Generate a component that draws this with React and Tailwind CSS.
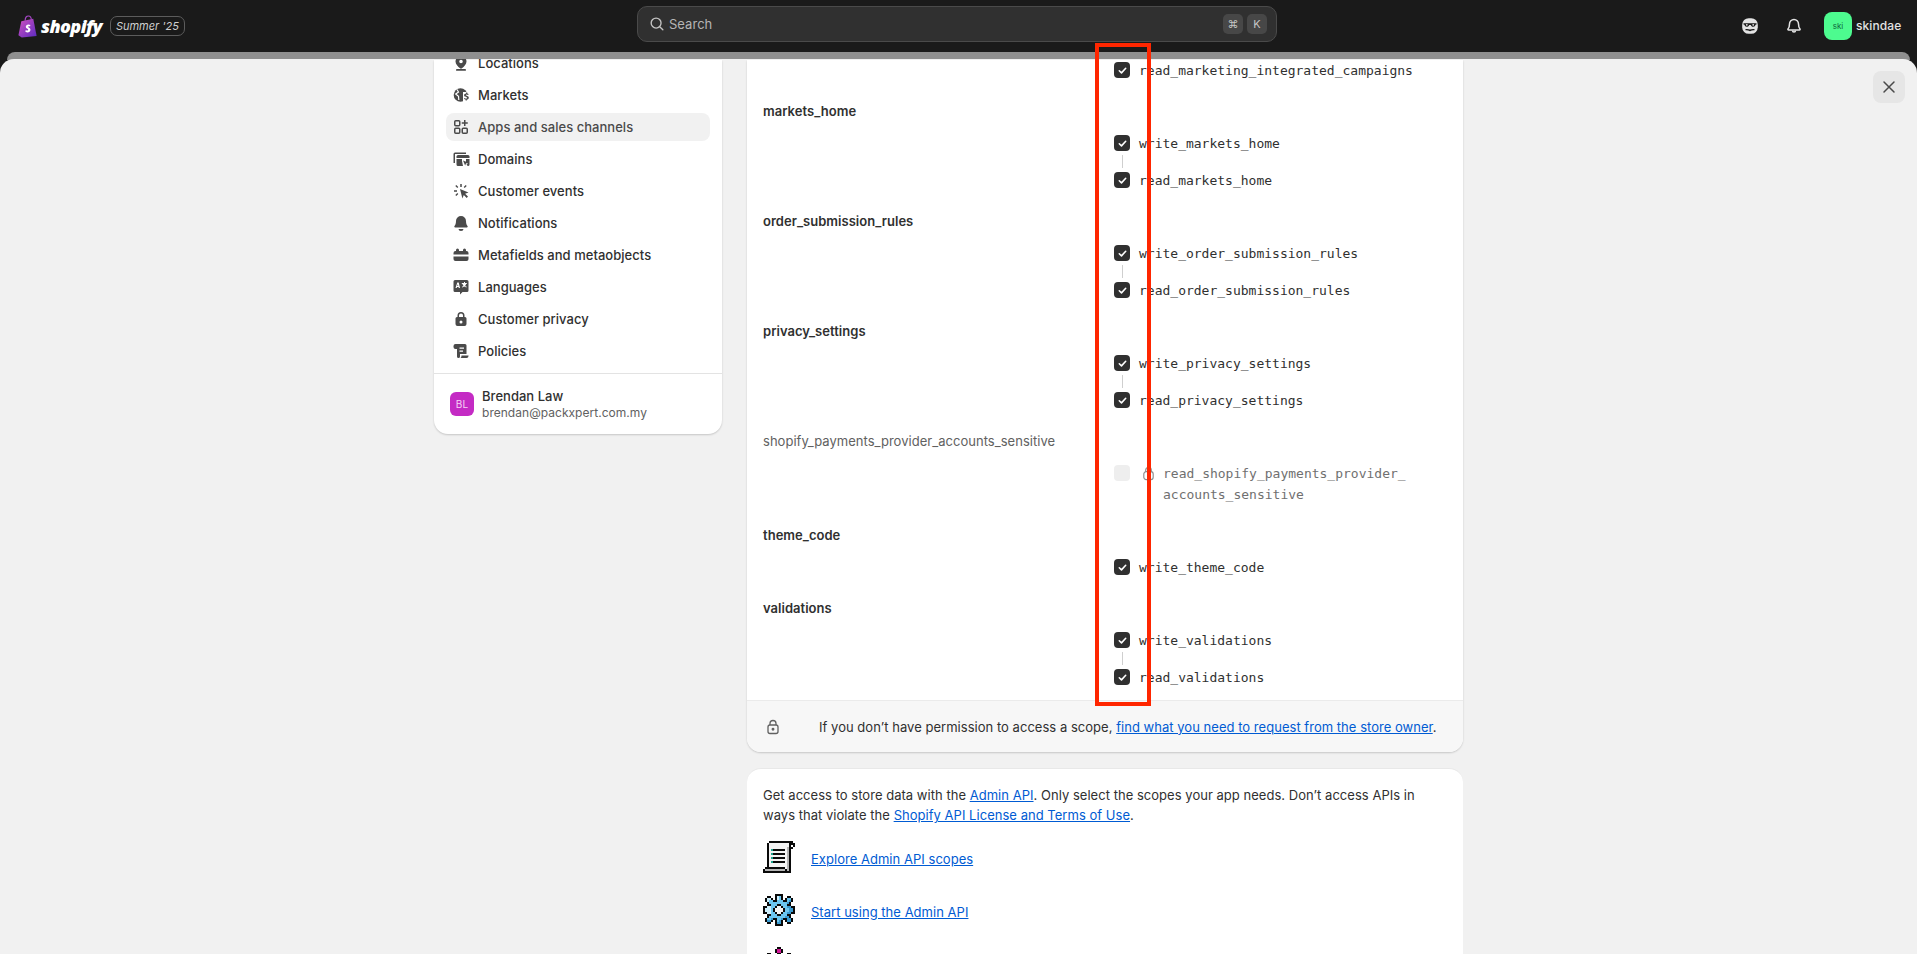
import React from "react";

const PIX = { k: "#0a0a0a", w: "#f4f4f4", g: "#b5b5b5", t: "#1fa58f", b: "#6cc6f0", d: "#3a9ad0", l: "#cdeefb", m: "#d6189a" };

function Pixels({ rows, className }) {
  return (
    <svg viewBox="0 0 16 16" width="32" height="32" shapeRendering="crispEdges" className={"shrink-0 " + (className || "")}>
      {rows.flatMap((r, y) =>
        r.split("").map((c, x) => (PIX[c] ? <rect key={x + "-" + y} x={x} y={y} width="1" height="1" fill={PIX[c]} /> : null))
      )}
    </svg>
  );
}

const scrollRows = [
  "   kkkkkkkkkkkk ",
  "  kwwwwwwwwwwkkk",
  "  kwwwwwwwwwwk k",
  "  kwwwwwwwwwgkk ",
  "  kwtkkkkkkwgk  ",
  "  kwwwwwwwwwgk  ",
  "  kwtkkkkkkwgk  ",
  "  kwwwwwwwwwgk  ",
  "  kwtkkkkkkwgk  ",
  "  kwwwwwwwwwgk  ",
  "  kwtkkkkkkwgk  ",
  "  kwwwwwwwwwgk  ",
  "  kwwwwwwwwwgk  ",
  " kkkkkkkkkkwgk  ",
  "kggggggggggkgk  ",
  "kkkkkkkkkkkkkk  ",
];

const gearRows = [
  "      kkkk      ",
  "  kk  klbk  kk  ",
  " kllk klbk kbbk ",
  " klbbkkbbbkkbdk ",
  "  kbbbbbbbbbdk  ",
  "  kkbbbkkbbbkk  ",
  "kkllbbkwwkbbddkk",
  "klllbkwwwwkbbddk",
  "klllbkwwwwkbbddk",
  "kkllbbkwwkbbddkk",
  "  kkbbbkkbbbkk  ",
  "  kbbbbbbbbddk  ",
  " kbbdkkbbdkkddk ",
  " kddk kbdk kddk ",
  "  kk  kddk  kk  ",
  "      kkkk      ",
];

const stateRows = [
  "       kk       ",
  "      kmmk      ",
  "      kmmk      ",
  "  kk   kk   kk  ",
];

function Ico({ children }) {
  return (
    <svg viewBox="0 0 20 20" width="20" height="20" fill="#4a4a4a" className="shrink-0">
      {children}
    </svg>
  );
}

const ICONS = {
  location: (
    <Ico>
      <path fillRule="evenodd" d="M10 3a5.500 5.500 0 0 0-5.500 5.500c0 2.600 2.500 5.200 4.600 6.800a1.500 1.500 0 0 0 1.800 0c2.100-1.600 4.600-4.200 4.600-6.800A5.500 5.500 0 0 0 10 3Zm0 7.300a1.800 1.800 0 1 1 0-3.600 1.800 1.800 0 0 1 0 3.600Z" />
      <rect x="5" y="16" width="10" height="1.800" rx=".9" />
    </Ico>
  ),
  globe: (
    <Ico>
      <circle cx="9.500" cy="10" r="6.800" />
      <path d="M6 4.500 7.500 7l-2.800 2 2.800 2.300.3 3.700" fill="none" stroke="#fff" strokeWidth="1.200" />
      <rect x="12" y="7" width="7" height="10" fill="#fff" />
      <path d="M15.100 7.500v1c-1.200.1-2 .8-2 1.800 0 2 3 1.400 3 2.600 0 .4-.5.600-1 .600-.6 0-1.100-.2-1.500-.6l-.7.900c.4.400 1 .7 1.700.8v1h1.200v-1c1.200-.2 2-.9 2-1.900 0-2.100-3-1.500-3-2.600 0-.3.400-.5.900-.5.500 0 .9.200 1.300.5l.7-.9a3 3 0 0 0-1.400-.6v-1h-1.700Z" />
    </Ico>
  ),
  apps: (
    <Ico>
      <g fill="none" stroke="#4a4a4a" strokeWidth="1.500">
        <rect x="3.750" y="3.750" width="5" height="5" rx="1" />
        <rect x="3.750" y="11.250" width="5" height="5" rx="1" />
        <rect x="11.250" y="11.250" width="5" height="5" rx="1" />
        <path d="M13.750 3v6M10.750 6h6" />
      </g>
    </Ico>
  ),
  domains: (
    <Ico>
      <path d="M2.500 5A1.500 1.500 0 0 1 4 3.500h11V5H4v9H2.500V5Z" />
      <path d="M5.500 7.500a1.500 1.500 0 0 1 1.500-1.500h10a1.500 1.500 0 0 1 1.500 1.500V9h-13V7.500Z" />
      <path d="M5.500 10H11v2l1 5H7a1.500 1.500 0 0 1-1.500-1.500V10Z" />
      <path d="M15 10h3.500v5.500A1.500 1.500 0 0 1 17 17h-.3l-1.200-1.500 1.500-.8L15 13.800V10Z" />
      <path d="m12 11.500 5 2-2 .9-.9 2.100-2.100-5Z" />
    </Ico>
  ),
  events: (
    <Ico>
      <path d="m9 8 8.500 3.400-3.400 1.300 2.900 2.900-1.300 1.300-2.900-2.900-1.400 3.500L9 8Z" />
      <path d="M9.250 3h1.500v3h-1.500zM3 9.250h3v1.500H3zM4.300 4.900l1-1 2 2-1 1zM4.300 14.100l2-2 1 1-2 2zM12.700 5.900l2-2 1 1-2 2z" />
    </Ico>
  ),
  bell: (
    <Ico>
      <path d="M10 3a5 5 0 0 0-5 5c0 2.800-.8 4.200-1.500 5.100-.5.600-.1 1.400.7 1.400h11.600c.8 0 1.200-.8.700-1.400C15.800 12.200 15 10.800 15 8a5 5 0 0 0-5-5Z" />
      <path d="M7.500 16h5a2.500 2 0 0 1-5 0Z" />
    </Ico>
  ),
  meta: (
    <Ico>
      <path d="M5 5a1.500 1.500 0 0 1 3 0v1h4V5a1.500 1.500 0 0 1 3 0v1h.5A2 2 0 0 1 17.500 8v1.500h-15V8A2 2 0 0 1 4.500 6H5V5Z" />
      <path d="M2.500 11.500h15V14a2 2 0 0 1-2 2h-11a2 2 0 0 1-2-2v-2.500Z" />
    </Ico>
  ),
  lang: (
    <Ico>
      <path d="M4 3h12a1.500 1.500 0 0 1 1.500 1.500v9A1.500 1.500 0 0 1 16 15h-4.500L9 17.500V15H4a1.500 1.500 0 0 1-1.500-1.500v-9A1.500 1.500 0 0 1 4 3Z" />
      <path d="M6.300 5.500 4.500 11h1.200l.3-1h1.500l.3 1H9L7.700 5.500H6.300Zm0 3.500.5-1.800.5 1.800h-1Z" fill="#fff" />
      <path d="M13 5v1h-2.200v1h.7c.2.800.6 1.400 1 1.900-.5.300-1 .5-1.600.6l.3 1c.8-.2 1.500-.5 2.100-.9.600.4 1.300.7 2.100.9l.3-1c-.6-.1-1.100-.3-1.600-.6.500-.5.800-1.100 1-1.900h.7V6H14V5h-1Z" fill="#fff" />
    </Ico>
  ),
  lock: (
    <Ico>
      <path fillRule="evenodd" d="M6.500 8V6.500a3.500 3.500 0 1 1 7 0V8h.5a1.500 1.500 0 0 1 1.500 1.500V15a2 2 0 0 1-2 2H6.500a2 2 0 0 1-2-2V9.500A1.500 1.500 0 0 1 6 8h.5ZM8 8h4V6.500a2 2 0 1 0-4 0V8Zm2 6.500a1.500 1.500 0 1 0 0-3 1.500 1.500 0 0 0 0 3Z" />
    </Ico>
  ),
  policy: (
    <Ico>
      <path fillRule="evenodd" d="M4.500 3H14a1.500 1.500 0 0 1 1.500 1.500V13H9v2.500a1.500 1.500 0 0 1-1.500 1.500A1.500 1.500 0 0 1 6 15.500V8H4.500A2 2 0 0 1 2.500 6V5a2 2 0 0 1 2-2Zm4 3.500v1.300H13V6.500H8.500Zm0 3v1.300H12V9.500H8.500Z" />
      <path d="M10.500 14.500h7V15a2 2 0 0 1-2 2h-6a3 3 0 0 0 1-2.500Z" />
    </Ico>
  ),
};

const NAV = [
  ["Locations", "location"],
  ["Markets", "globe"],
  ["Apps and sales channels", "apps", true],
  ["Domains", "domains"],
  ["Customer events", "events"],
  ["Notifications", "bell"],
  ["Metafields and metaobjects", "meta"],
  ["Languages", "lang"],
  ["Customer privacy", "lock"],
  ["Policies", "policy"],
];

function Check() {
  return (
    <span className="w-4 h-4 rounded-[4px] bg-[#303030] flex items-center justify-center shrink-0">
      <svg viewBox="0 0 12 12" width="11" height="11" fill="none" stroke="#fff" strokeWidth="1.700" strokeLinecap="round" strokeLinejoin="round">
        <path d="m2.500 6.300 2.400 2.300 4.600-5" />
      </svg>
    </span>
  );
}

function Scope({ name }) {
  return (
    <div className="flex items-center h-5 gap-[9px] pl-[351px]">
      <Check />
      <span className="pt-px font-['DejaVu_Sans_Mono',monospace] tracking-normal text-[13px] leading-5 text-[#303030]">{name}</span>
    </div>
  );
}

function Connector() {
  return (
    <div className="h-[17px] flex items-center pl-[359px]">
      <div className="w-px h-[13px] bg-[#cfcfcf]" />
    </div>
  );
}

function Group({ label, write, read }) {
  return (
    <div className="flex flex-col mt-[21px]">
      <div className="h-5 leading-5 text-[13px] font-semibold text-[#303030] mb-3">{label}</div>
      {write && <Scope name={write} />}
      {write && read && <Connector />}
      {read && <Scope name={read} />}
    </div>
  );
}

export default function App() {
  return (
    <div className="w-[1917px] h-[954px] overflow-hidden flex flex-col bg-[#1a1a1a] font-['Inter',sans-serif] text-[13px] tracking-[0.03px] text-[#303030]">
      {/* top bar */}
      <header className="h-[52px] shrink-0 relative flex items-center justify-between pl-[18px] pr-[14px]">
        <div className="flex items-center">
          <svg viewBox="0 0 20 24" width="20" height="23" className="shrink-0">
            <defs>
              <linearGradient id="bag" x1="0" y1="0" x2="1" y2="1">
                <stop offset="0" stopColor="#d24fc0" />
                <stop offset="1" stopColor="#5a2bc0" />
              </linearGradient>
            </defs>
            <path d="M7 6c0-3 1.500-5 3.500-5s3 2 3 4.500" fill="none" stroke="#a748c8" strokeWidth="1.200" />
            <path d="M3 6.500 15.500 4l3.500 18-15.500 1.500L0 21 3 6.500Z" fill="url(#bag)" />
            <path d="M12.500 10.500c-.6-.4-1.300-.6-2-.6-1.700 0-2.800 1-2.800 2.400 0 2 2.600 2 2.600 3.100 0 .5-.4.800-1 .8-.8 0-1.600-.5-1.600-.5l-.5 1.900s.9.700 2.300.7c1.800 0 3.100-1.100 3.100-2.800 0-2.200-2.600-2.300-2.600-3.200 0-.3.300-.6 1-.6.500 0 1.100.2 1.100.2l.4-1.400Z" fill="#fff" />
          </svg>
          <span className="ml-[3px] font-['Open_Sans',sans-serif] italic font-extrabold text-[18px] leading-none tracking-[-0.6px] text-white">shopify</span>
          <span className="ml-[8px] h-5 w-[75px] justify-center flex items-center rounded-[7px] border border-[#5c5c5c] italic text-[11px] tracking-normal text-[#d0d0d0]">Summer '25</span>
        </div>

        <div className="absolute left-[637px] top-[6px] w-[640px] h-9 rounded-[10px] bg-[#303030] border border-[#4a4a4a] flex items-center pl-[10px] pr-[9px]">
          <svg viewBox="0 0 20 20" width="18" height="18" fill="none" stroke="#c4c4c4" strokeWidth="1.500" strokeLinecap="round">
            <circle cx="9" cy="9" r="5.500" />
            <path d="m13 13 3.500 3.500" />
          </svg>
          <span className="ml-[3px] pt-px text-[13px] text-[#b5b5b5]">Search</span>
          <div className="ml-auto flex gap-1">
            <span className="w-5 h-5 rounded-[5px] bg-[#474747] flex items-center justify-center text-[11px] text-[#c4c4c4]">⌘</span>
            <span className="w-5 h-5 rounded-[5px] bg-[#474747] flex items-center justify-center text-[11px] text-[#c4c4c4]">K</span>
          </div>
        </div>

        <div className="flex items-center">
          <svg viewBox="0 0 20 20" width="20" height="20" className="mr-6">
            <rect x="2.200" y="2.200" width="15.600" height="15.600" rx="6.500" fill="#e3e3e3" />
            <path fill="#1a1a1a" d="M3.500 7.300h13v1.200l-1 .2c-.2 1.300-1 2-2.300 2-1.200 0-2.100-.7-2.400-1.800H9.200c-.3 1.100-1.200 1.800-2.400 1.800-1.300 0-2.100-.7-2.300-2l-1-.2V7.300Z" />
            <circle cx="6.800" cy="8.800" r=".9" fill="#e3e3e3" />
            <circle cx="13.200" cy="8.800" r=".9" fill="#e3e3e3" />
            <path fill="#1a1a1a" d="M5.500 13c1.700-.2 3.300-.1 4.500.6 1.200-.7 2.800-.8 4.500-.6v1.300c-1.500-.1-3 0-4.500.9-1.500-.9-3-1-4.500-.9V13Z" />
          </svg>
          <svg viewBox="0 0 20 20" width="20" height="20" fill="none" stroke="#e3e3e3" strokeWidth="1.500" strokeLinejoin="round" className="mr-[20px]">
            <path d="M10 3.500a4.500 4.500 0 0 0-4.500 4.500c0 2.800-.7 4-1.500 5-.3.400 0 1 .5 1h11c.5 0 .8-.6.500-1-.8-1-1.500-2.200-1.500-5A4.500 4.500 0 0 0 10 3.500Z" />
            <path d="M8.500 14.500a1.500 1.500 0 0 0 3 0" />
          </svg>
          <span className="w-7 h-7 rounded-lg bg-[#4dfb8f] flex items-center justify-center text-[8px] text-[#0e6b40]">ski</span>
          <span className="ml-1 text-[12px] font-medium tracking-[0.1px] text-[#e3e3e3] w-[47px]">skindae</span>
        </div>
      </header>

      {/* sheet behind */}
      <div className="h-2 shrink-0 mx-[7px] bg-[#8f8f8f] rounded-t-[12px]" />

      {/* main panel */}
      <main className="relative flex-1 min-h-0 overflow-hidden bg-[#f1f1f1] rounded-t-[14px] -mt-px pt-px pl-[434px]">
        <div className="flex items-start gap-[25px]">
          {/* sidebar */}
          <aside className="w-[288px] shrink-0 rounded-b-[14px] bg-white shadow-[0_1px_2px_rgba(0,0,0,0.18)]">
            <nav className="-mt-[11px] px-3 pb-2 flex flex-col gap-1 border-b border-[#e3e3e3]">
              {NAV.map(([label, ic, active]) => (
                <div key={label} className={"h-7 flex items-center gap-[7px] pl-[5px] rounded-lg text-[13px] font-[450] " + (active ? "bg-[#f1f1f1]" : "")}>
                  {ICONS[ic]}
                  <span className={"pt-px " + (active ? "text-[#4a4a4a]" : "text-[#303030]")}>{label}</span>
                </div>
              ))}
            </nav>
            <div className="h-[60px] flex items-center pl-4 gap-2">
              <span className="w-6 h-6 rounded-[6px] bg-[#c42bc4] flex items-center justify-center text-[10px] text-[#f5d4f5]">BL</span>
              <div className="flex flex-col">
                <span className="text-[13px] leading-[18px] font-[500] text-[#303030]">Brendan Law</span>
                <span className="text-[12px] leading-4 text-[#616161]">brendan@packxpert.com.my</span>
              </div>
            </div>
          </aside>

          {/* content */}
          <div className="w-[716px] shrink-0 flex flex-col gap-[16px]">
            <section className="bg-white rounded-b-[14px] shadow-[0_1px_2px_rgba(0,0,0,0.18)] overflow-hidden">
              <div className="px-4 pb-[13px]">
                <Scope name="read_marketing_integrated_campaigns" />
                <Group label="markets_home" write="write_markets_home" read="read_markets_home" />
                <Group label="order_submission_rules" write="write_order_submission_rules" read="read_order_submission_rules" />
                <Group label="privacy_settings" write="write_privacy_settings" read="read_privacy_settings" />
                <div className="flex flex-col mt-[21px]">
                  <div className="h-5 leading-5 text-[13px] text-[#616161] mb-3">shopify_payments_provider_accounts_sensitive</div>
                  <div className="h-[41px] flex items-start pl-[351px] font-['DejaVu_Sans_Mono',monospace] tracking-normal text-[13px] leading-[21px] text-[#707070]">
                    <span className="mt-[2px] w-4 h-4 rounded-[4px] bg-[#eeeeee] shrink-0" />
                    <svg viewBox="0 0 16 16" width="15" height="15" fill="none" stroke="#8a8a8a" strokeWidth="1.200" className="ml-[11px] mt-[3px] shrink-0">
                      <path d="M5 6V4.500a3 3 0 0 1 6 0V6" />
                      <rect x="3" y="6" width="10" height="8.500" rx="2.500" />
                    </svg>
                    <span className="ml-[7px]">
                      read_shopify_payments_provider_<br />accounts_sensitive
                    </span>
                  </div>
                </div>
                <Group label="theme_code" write="write_theme_code" />
                <Group label="validations" write="write_validations" read="read_validations" />
              </div>
              <div className="h-[52px] bg-[#f7f7f7] border-t border-[#ebebeb] flex items-center pl-4">
                <svg viewBox="0 0 20 20" width="20" height="20" fill="none" stroke="#616161" strokeWidth="1.300" className="shrink-0">
                  <path d="M7 8V6.500a3 3 0 0 1 6 0V8" />
                  <rect x="5" y="8" width="10" height="8.500" rx="2" />
                  <circle cx="10" cy="12.200" r=".8" fill="#616161" />
                </svg>
                <p className="ml-[36px] pt-[2px]">
                  If you don’t have permission to access a scope,{" "}
                  <a className="text-[#005bd3] underline">find what you need to request from the store owner</a>.
                </p>
              </div>
            </section>

            <section className="bg-white rounded-t-[14px] border-t border-[#e8e8e8] px-4 pt-[16px] flex flex-col">
              <p className="leading-5">
                Get access to store data with the <a className="text-[#005bd3] underline">Admin API</a>. Only select the scopes your app needs. Don’t access APIs in ways that violate the{" "}
                <a className="text-[#005bd3] underline">Shopify API License and Terms of Use</a>.
              </p>
              <div className="mt-4 flex flex-col gap-[21px]">
                <div className="flex items-center gap-4">
                  <Pixels rows={scrollRows} />
                  <a className="pt-[5px] text-[#005bd3] underline">Explore Admin API scopes</a>
                </div>
                <div className="flex items-center gap-4">
                  <Pixels rows={gearRows} />
                  <a className="pt-[5px] text-[#005bd3] underline">Start using the Admin API</a>
                </div>
                <div className="flex items-center gap-4">
                  <Pixels rows={stateRows} />
                </div>
              </div>
            </section>
          </div>
        </div>

        <button className="absolute right-3 top-3 w-8 h-8 rounded-lg bg-[#e6e6e6] flex items-center justify-center">
          <svg viewBox="0 0 20 20" width="20" height="20" fill="none" stroke="#4a4a4a" strokeWidth="1.500" strokeLinecap="round">
            <path d="m5 5 10 10M15 5 5 15" />
          </svg>
        </button>
      </main>

      {/* red annotation over the page */}
      <div className="absolute left-[1095px] top-[43px] w-[56px] h-[663px] border-[4px] border-[#ff2600] pointer-events-none" />
    </div>
  );
}
